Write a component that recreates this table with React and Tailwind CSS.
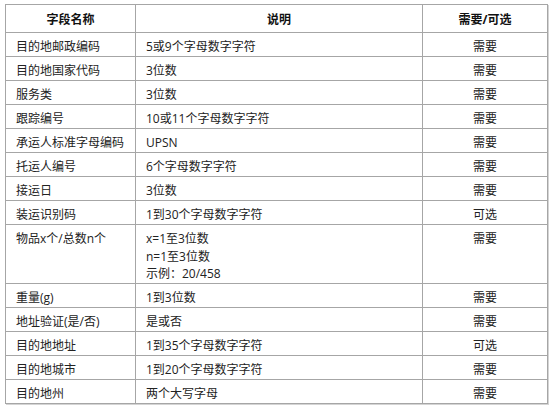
const rows = [
  { name: '目的地邮政编码', desc: ['5或9个字母数字字符'], req: '需要' },
  { name: '目的地国家代码', desc: ['3位数'], req: '需要' },
  { name: '服务类', desc: ['3位数'], req: '需要' },
  { name: '跟踪编号', desc: ['10或11个字母数字字符'], req: '需要' },
  { name: '承运人标准字母编码', desc: ['UPSN'], req: '需要' },
  { name: '托运人编号', desc: ['6个字母数字字符'], req: '需要' },
  { name: '接运日', desc: ['3位数'], req: '需要' },
  { name: '装运识别码', desc: ['1到30个字母数字字符'], req: '可选' },
  { name: '物品x个/总数n个', desc: ['x=1至3位数', 'n=1至3位数', '示例：20/458'], req: '需要' },
  { name: '重量(g)', desc: ['1到3位数'], req: '需要' },
  { name: '地址验证(是/否)', desc: ['是或否'], req: '需要' },
  { name: '目的地地址', desc: ['1到35个字母数字字符'], req: '可选' },
  { name: '目的地城市', desc: ['1到20个字母数字字符'], req: '需要' },
  { name: '目的地州', desc: ['两个大写字母'], req: '需要' },
];

const App = () => {
  return (
    <div
      className="w-[554px] h-[408px] bg-white pt-[4px] pl-[5px] text-[12px] text-[#222]"
      style={{ fontFamily: '"Open Sans", "Noto Sans CJK SC", sans-serif' }}
    >
      <table className="border-collapse table-fixed w-[542px] shadow-[1px_1px_0_#d4d4d4]">
        <colgroup>
          <col className="w-[130px]" />
          <col className="w-[287px]" />
          <col className="w-[125px]" />
        </colgroup>
        <thead>
          <tr>
            {['字段名称', '说明', '需要/可选'].map((h) => (
              <th
                key={h}
                className="border border-[#a6a6a6] pt-[6px] pb-[3px] leading-[18px] font-bold text-[#111] text-center"
              >
                {h}
              </th>
            ))}
          </tr>
        </thead>
        <tbody>
          {rows.map((r) => (
            <tr key={r.name}>
              <td className="border border-[#a6a6a6] px-[10px] pt-[5px] pb-0 leading-[18px] align-top">
                {r.name}
              </td>
              <td className="border border-[#a6a6a6] px-[10px] pt-[5px] pb-0 align-top">
                {r.desc.map((d) => (
                  <div key={d} className={r.desc.length > 1 ? 'leading-[17.5px]' : 'leading-[18px]'}>
                    {d}
                  </div>
                ))}
              </td>
              <td className="border border-[#a6a6a6] px-[10px] pt-[5px] pb-0 leading-[18px] align-top text-center">
                {r.req}
              </td>
            </tr>
          ))}
        </tbody>
      </table>
    </div>
  );
};

export default App;
